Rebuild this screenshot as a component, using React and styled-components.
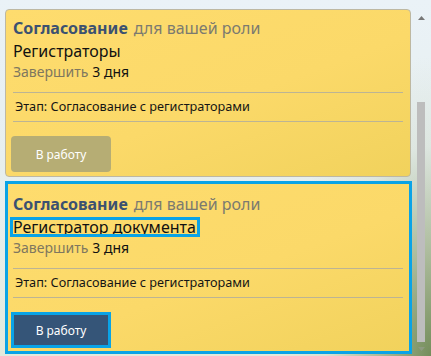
import React from "react";
import styled, { createGlobalStyle } from "styled-components";

const Global = createGlobalStyle`
  html, body { margin: 0; padding: 0; height: 100%; }
  body {
    font-family: "Noto Sans", "Open Sans", sans-serif;
    background:
      radial-gradient(ellipse 150px 300px at 100% 100%, rgba(110,136,84,0.95) 0%, rgba(150,168,126,0.7) 35%, rgba(200,210,190,0.3) 70%, rgba(230,238,235,0) 100%),
      linear-gradient(180deg, #eaf2f7 0%, #e6eeec 60%, #e2eadc 100%);
    overflow: hidden;
  }
  #root { height: 100%; }
`;

const Page = styled.div`
  display: flex;
  height: 356px;
  width: 431px;
`;

const List = styled.div`
  display: flex;
  flex-direction: column;
  gap: 4px;
  width: 406px;
  padding: 9px 0 0 5px;
  box-sizing: content-box;
`;

const Card = styled.div`
  box-sizing: border-box;
  width: ${(p) => (p.$active ? "407px" : "406px")};
  border: ${(p) => (p.$active ? "3px solid #0aa3e6" : "1px solid #bdb8a2")};
  border-radius: ${(p) => (p.$active ? "0" : "4px")};
  background: linear-gradient(160deg, #fedc6e 0%, #fbd969 55%, #f1d25c 100%);
  padding: ${(p) => (p.$active ? "10px 6px 3px 5px" : "8px 7px 4px 7px")};
  display: flex;
  flex-direction: column;
`;

const TitleRow = styled.div`
  font-size: 16px;
  line-height: 20px;
  white-space: nowrap;
`;

const Kind = styled.span`
  font-weight: 700;
  color: #3b5171;
`;

const Role = styled.span`
  color: #7b7a70;
  margin-left: 6px;
`;

const Performer = styled.div`
  margin-top: 3px;
  font-size: 16px;
  line-height: 20px;
  color: #111;
`;

const Marked = styled.span`
  display: inline-block;
  padding: 0 4px 0 3px;
  margin: 0 -4px 0 -3px;
  outline: ${(p) => (p.$marked ? "3px solid #0aa3e6" : "none")};
  outline-offset: -3px;
`;

const Due = styled.div`
  margin-top: 2px;
  font-size: 14px;
  line-height: 18px;
  color: #111;
`;

const DueLabel = styled.span`
  color: #7f775f;
  margin-right: 4px;
`;

const Stage = styled.div`
  margin-top: 11px;
  border-top: 1px solid #bcb494;
  border-bottom: 1px solid #bcb494;
  padding: 5px 3px 7px 2px;
  font-size: 12.7px;
  line-height: 16px;
  color: #151515;
`;

const Button = styled.button`
  margin: 14px 0 0 -2px;
  width: 100px;
  height: 36px;
  border: none;
  border-radius: ${(p) => (p.$active ? "0" : "4px")};
  background: ${(p) => (p.$active ? "#355578" : "#b6ad74")};
  box-shadow: ${(p) => (p.$active ? "inset 0 0 0 3px #0aa3e6" : "none")};
  color: #fff;
  font-family: "Noto Sans", "Open Sans", sans-serif;
  font-size: 12px;
  padding: 0;
  align-self: flex-start;
`;

const Scrollbar = styled.div`
  margin-left: 2px;
  width: 16px;
  display: flex;
  flex-direction: column;
  align-items: center;
`;

const Arrow = styled.div`
  height: ${(p) => p.$h}px;
  display: flex;
  align-items: center;
  justify-content: center;
  flex-shrink: 0;
`;

const Track = styled.div`
  flex: 1;
  width: 100%;
  display: flex;
  justify-content: center;
`;

const Thumb = styled.div`
  width: 8px;
  margin-top: ${(p) => p.$top}px;
  height: ${(p) => p.$height}px;
  background: #bdbdbd;
`;

const Tri = ({ down, color }) => (
  <svg width="7" height="4" viewBox="0 0 7 4">
    <polygon points={down ? "0,0 7,0 3.5,4" : "0,4 7,4 3.5,0"} fill={color} />
  </svg>
);

const tasks = [
  { performer: "Регистраторы", active: false },
  { performer: "Регистратор документа", active: true },
];

export default function App() {
  return (
    <>
      <Global />
      <Page>
        <List>
          {tasks.map((t) => (
            <Card key={t.performer} $active={t.active}>
              <TitleRow>
                <Kind>Согласование</Kind>
                <Role>для вашей роли</Role>
              </TitleRow>
              <Performer>
                <Marked $marked={t.active}>{t.performer}</Marked>
              </Performer>
              <Due>
                <DueLabel>Завершить</DueLabel>3 дня
              </Due>
              <Stage>Этап: Согласование с регистраторами</Stage>
              <Button $active={t.active}>В работу</Button>
            </Card>
          ))}
        </List>
        <Scrollbar>
          <Arrow $h={36}>
            <Tri color="#777" />
          </Arrow>
          <Track>
            <Thumb $top={66} $height={240} />
          </Track>
          <Arrow $h={14}>
            <Tri down color="#8d9a80" />
          </Arrow>
        </Scrollbar>
      </Page>
    </>
  );
}
